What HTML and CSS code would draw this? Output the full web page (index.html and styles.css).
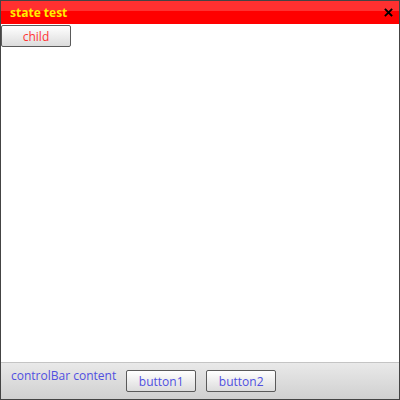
FILE: index.html
```html
<!DOCTYPE html>
<html>
<head>
<meta charset="utf-8">
<link rel="stylesheet" href="styles.css">
</head>
<body>
<div class="panel">
  <div class="title-bar">
    <span class="title">state test</span>
    <svg class="close" width="9" height="9" viewBox="0 0 9 9">
      <path d="M1.5 1.5 L7.5 7.5 M7.5 1.5 L1.5 7.5" stroke="#000" stroke-width="1.8" stroke-linecap="square"/>
    </svg>
  </div>
  <div class="content">
    <button class="btn child">child</button>
  </div>
  <div class="control-bar">
    <span class="cb-text">controlBar content</span>
    <button class="btn cb-btn">button1</button>
    <button class="btn cb-btn">button2</button>
  </div>
</div>
</body>
</html>
```
FILE: styles.css
```css
html, body {
  margin: 0;
  padding: 0;
  background: #fff;
}
.panel {
  box-sizing: border-box;
  width: 400px;
  height: 400px;
  border: 1px solid #444;
  display: flex;
  flex-direction: column;
  font-family: "Open Sans", "Noto Sans", sans-serif;
  font-size: 12px;
}
.title-bar {
  height: 23px;
  flex: none;
  display: flex;
  align-items: center;
  justify-content: space-between;
  padding: 0 6px 0 9px;
  background: linear-gradient(#ff3030 0, #ff3030 10px, #ff0000 10px, #ff0000 100%);
}
.title {
  color: #ffee00;
  font-weight: bold;
  font-size: 12px;
}
.close {
  display: block;
}
.content {
  flex: 1;
  padding-top: 1px;
}
.btn {
  box-sizing: border-box;
  height: 22px;
  width: 70px;
  border: 1px solid #5a5a5a;
  border-radius: 2px;
  background: linear-gradient(#ffffff, #dcdcdc);
  font-family: "Open Sans", "Noto Sans", sans-serif;
  font-size: 12px;
  padding: 0;
  display: block;
}
.child {
  color: #ff3333;
}
.control-bar {
  height: 37px;
  flex: none;
  box-sizing: border-box;
  border-top: 1px solid #c4c4c4;
  background: linear-gradient(#e9e9e9, #d0d0d0);
  display: flex;
  align-items: flex-start;
  padding: 6px 0 0 10px;
}
.cb-text {
  color: #5050e0;
  line-height: 14px;
}
.cb-btn {
  color: #5050e0;
  margin-top: 1px;
  margin-left: 10px;
}
```
